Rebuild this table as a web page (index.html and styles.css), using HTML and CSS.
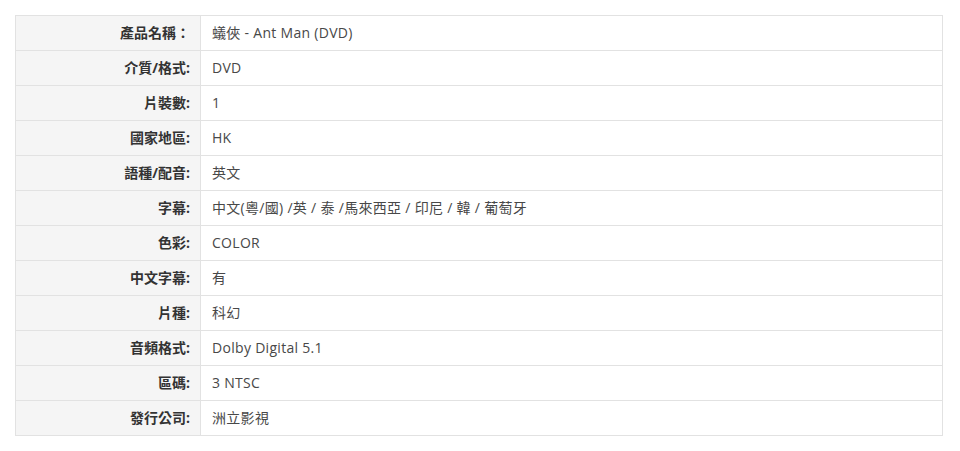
FILE: index.html
```html
<!DOCTYPE html>
<html lang="zh-Hant">
<head>
<meta charset="utf-8">
<link rel="stylesheet" href="styles.css">
</head>
<body>
<table class="spec">
  <tbody>
    <tr><th>產品名稱：</th><td>蟻俠 - Ant Man (DVD)</td></tr>
    <tr><th>介質/格式:</th><td>DVD</td></tr>
    <tr><th>片裝數:</th><td>1</td></tr>
    <tr><th>國家地區:</th><td>HK</td></tr>
    <tr><th>語種/配音:</th><td>英文</td></tr>
    <tr><th>字幕:</th><td>中文(粵/國) /英 / 泰 /馬來西亞 / 印尼 / 韓 / 葡萄牙</td></tr>
    <tr><th>色彩:</th><td>COLOR</td></tr>
    <tr><th>中文字幕:</th><td>有</td></tr>
    <tr><th>片種:</th><td>科幻</td></tr>
    <tr><th>音頻格式:</th><td>Dolby Digital 5.1</td></tr>
    <tr><th>區碼:</th><td>3 NTSC</td></tr>
    <tr><th>發行公司:</th><td>洲立影視</td></tr>
  </tbody>
</table>
</body>
</html>
```
FILE: styles.css
```css
html, body {
  margin: 0;
  padding: 0;
  background: #fff;
}
body {
  padding: 15px 0 0 15px;
  font-family: "Open Sans", "Noto Sans CJK TC", sans-serif;
  font-size: 14px;
}
.spec {
  border-collapse: collapse;
  width: 928px;
  table-layout: fixed;
}
.spec th,
.spec td {
  border: 1px solid #e2e2e2;
  height: 34px;
  padding: 0;
  vertical-align: middle;
  line-height: 20px;
}
.spec th {
  width: 174px;
  background: #f5f5f5;
  color: #333;
  font-weight: bold;
  text-align: right;
  padding-right: 10px;
}
.spec td {
  color: #484848;
  text-align: left;
  padding-left: 11px;
  letter-spacing: 0.3px;
}
```
